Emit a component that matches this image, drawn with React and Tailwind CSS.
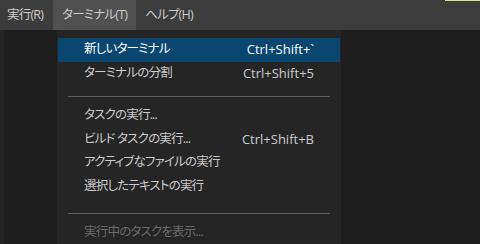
import React from 'react';

const font = "font-['Open_Sans','Noto_Sans_CJK_JP',sans-serif] [font-feature-settings:'palt']";
// Japanese labels: the reference UI font is a narrow one, so tighten it up
const jp = 'text-[12.5px] tracking-[-0.8px]';

const menuBar = [
  { label: '実行(R)', active: false },
  { label: 'ターミナル(T)', active: true },
  { label: 'ヘルプ(H)', active: false },
];

const Item = ({ label, shortcut, selected, disabled }) => (
  <div
    className={`mx-px h-[23.5px] flex items-center justify-between pl-[26px] pr-[26px] ${
      selected ? 'bg-[#094771] text-white' : disabled ? 'text-[#6b6b6b]' : 'text-[#cccccc]'
    }`}
  >
    <span className={jp}>{label}</span>
    {shortcut && <span className="text-[13px]">{shortcut}</span>}
  </div>
);

const Separator = ({ h, top }) => (
  <div className={`${h} ${top}`}>
    <div className="mx-[11px] h-px bg-[#5f5f5f]" />
  </div>
);

export default function App() {
  return (
    <div className={`relative w-[480px] h-[244px] overflow-hidden bg-[#1e1e1e] flex flex-col ${font}`}>
      {/* menu bar */}
      <div className="relative h-[30px] bg-[#3c3c3c] flex items-stretch">
        {menuBar.map((m) => (
          <div
            key={m.label}
            className={`flex items-center px-[9px] text-[#cccccc] ${jp} ${m.active ? 'bg-[#505050]' : ''} first:pl-[7px] first:pr-[10px]`}
          >
            {m.label}
          </div>
        ))}
        <div className="absolute top-0 right-0 w-[35px] h-px bg-[#dfe38c]" />
      </div>

      {/* editor area */}
      <div className="flex-1 flex">
        <div className="w-[4px] bg-[#252526]" />
      </div>

      {/* dropdown */}
      <div className="absolute left-[57px] top-[30px] w-[284px] h-[220px] bg-[#252526] pt-2">
        <Item label="新しいターミナル" shortcut="Ctrl+Shift+`" selected />
        <Item label="ターミナルの分割" shortcut="Ctrl+Shift+5" />
        <Separator h="h-[19px]" top="pt-[11px]" />
        <Item label="タスクの実行..." />
        <Item label="ビルド タスクの実行..." shortcut="Ctrl+Shift+B" />
        <Item label="アクティブなファイルの実行" />
        <Item label="選択したテキストの実行" />
        <Separator h="h-[22.5px]" top="pt-[15px]" />
        <Item label="実行中のタスクを表示..." disabled />
      </div>
    </div>
  );
}
